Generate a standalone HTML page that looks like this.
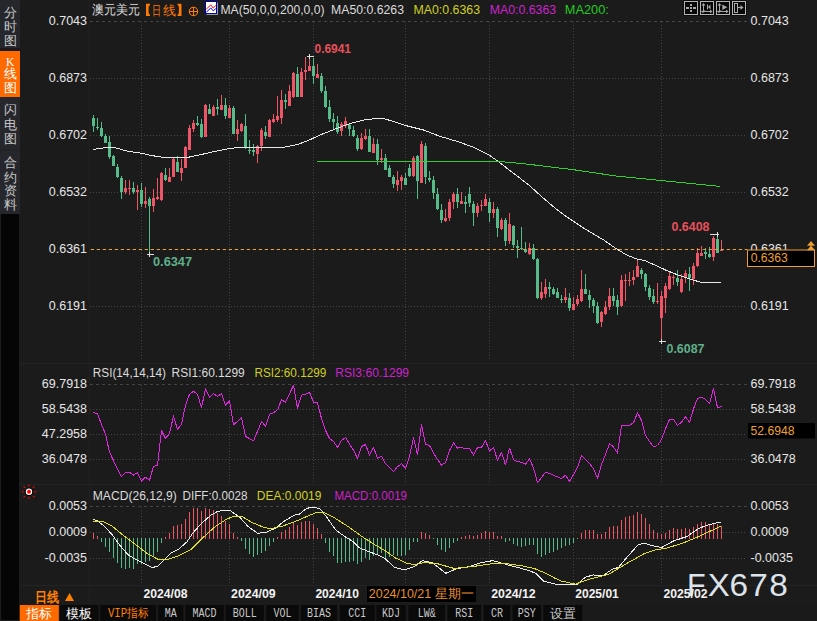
<!DOCTYPE html><html><head><meta charset="utf-8"><style>html,body{margin:0;padding:0;background:#1b1b1b;width:817px;height:621px;overflow:hidden}svg{display:block}text{white-space:pre}</style></head><body>
<svg width="817" height="621" viewBox="0 0 817 621">
<rect x="0" y="0" width="817" height="621" fill="#1b1b1b"/>
<rect x="0" y="0" width="20" height="621" fill="#1d1d1d"/>
<rect x="0" y="0" width="20" height="214" fill="#26272c"/>
<rect x="0" y="48" width="20" height="3" fill="#1a1a1c"/>
<rect x="0" y="51" width="20" height="46" fill="#ff6a00"/>
<rect x="0" y="149.5" width="20" height="1" fill="#1e1f22"/>
<rect x="1" y="214" width="18" height="406" fill="#050505"/>
<text x="10" y="16.9" fill="#c8c8c8" font-size="12.5" font-weight="normal" text-anchor="middle" font-family='"Liberation Sans", sans-serif' >分</text>
<text x="10" y="30.6" fill="#c8c8c8" font-size="12.5" font-weight="normal" text-anchor="middle" font-family='"Liberation Sans", sans-serif' >时</text>
<text x="10" y="44.6" fill="#c8c8c8" font-size="12.5" font-weight="normal" text-anchor="middle" font-family='"Liberation Sans", sans-serif' >图</text>
<text x="10.2" y="66" fill="#ffffff" font-size="11.5" font-weight="normal" text-anchor="middle" font-family='"Liberation Serif", serif' >K</text>
<text x="10" y="78.1" fill="#ffffff" font-size="12.5" font-weight="normal" text-anchor="middle" font-family='"Liberation Sans", sans-serif' >线</text>
<text x="10" y="91.9" fill="#ffffff" font-size="12.5" font-weight="normal" text-anchor="middle" font-family='"Liberation Sans", sans-serif' >图</text>
<text x="10" y="114.1" fill="#c8c8c8" font-size="12.5" font-weight="normal" text-anchor="middle" font-family='"Liberation Sans", sans-serif' >闪</text>
<text x="10" y="128.6" fill="#c8c8c8" font-size="12.5" font-weight="normal" text-anchor="middle" font-family='"Liberation Sans", sans-serif' >电</text>
<text x="10" y="143.1" fill="#c8c8c8" font-size="12.5" font-weight="normal" text-anchor="middle" font-family='"Liberation Sans", sans-serif' >图</text>
<text x="10" y="167.4" fill="#c8c8c8" font-size="12.5" font-weight="normal" text-anchor="middle" font-family='"Liberation Sans", sans-serif' >合</text>
<text x="10" y="181.8" fill="#c8c8c8" font-size="12.5" font-weight="normal" text-anchor="middle" font-family='"Liberation Sans", sans-serif' >约</text>
<text x="10" y="195.4" fill="#c8c8c8" font-size="12.5" font-weight="normal" text-anchor="middle" font-family='"Liberation Sans", sans-serif' >资</text>
<text x="10" y="208.9" fill="#c8c8c8" font-size="12.5" font-weight="normal" text-anchor="middle" font-family='"Liberation Sans", sans-serif' >料</text>
<rect x="19" y="363" width="798" height="1" fill="#232323"/>
<rect x="19" y="484" width="798" height="1" fill="#232323"/>
<rect x="89" y="0" width="1" height="604" fill="#202020"/>
<rect x="21" y="585" width="796" height="1" fill="#232323"/>
<line x1="141.5" y1="22" x2="141.5" y2="361" stroke="#444444" stroke-width="1" stroke-dasharray="1 2"/>
<line x1="141.5" y1="385" x2="141.5" y2="482" stroke="#444444" stroke-width="1" stroke-dasharray="1 2"/>
<line x1="141.5" y1="507" x2="141.5" y2="585" stroke="#444444" stroke-width="1" stroke-dasharray="1 2"/>
<line x1="229.5" y1="22" x2="229.5" y2="361" stroke="#444444" stroke-width="1" stroke-dasharray="1 2"/>
<line x1="229.5" y1="385" x2="229.5" y2="482" stroke="#444444" stroke-width="1" stroke-dasharray="1 2"/>
<line x1="229.5" y1="507" x2="229.5" y2="585" stroke="#444444" stroke-width="1" stroke-dasharray="1 2"/>
<line x1="313.5" y1="22" x2="313.5" y2="361" stroke="#444444" stroke-width="1" stroke-dasharray="1 2"/>
<line x1="313.5" y1="385" x2="313.5" y2="482" stroke="#444444" stroke-width="1" stroke-dasharray="1 2"/>
<line x1="313.5" y1="507" x2="313.5" y2="585" stroke="#444444" stroke-width="1" stroke-dasharray="1 2"/>
<line x1="405.5" y1="22" x2="405.5" y2="361" stroke="#444444" stroke-width="1" stroke-dasharray="1 2"/>
<line x1="405.5" y1="385" x2="405.5" y2="482" stroke="#444444" stroke-width="1" stroke-dasharray="1 2"/>
<line x1="405.5" y1="507" x2="405.5" y2="585" stroke="#444444" stroke-width="1" stroke-dasharray="1 2"/>
<line x1="489.5" y1="22" x2="489.5" y2="361" stroke="#444444" stroke-width="1" stroke-dasharray="1 2"/>
<line x1="489.5" y1="385" x2="489.5" y2="482" stroke="#444444" stroke-width="1" stroke-dasharray="1 2"/>
<line x1="489.5" y1="507" x2="489.5" y2="585" stroke="#444444" stroke-width="1" stroke-dasharray="1 2"/>
<line x1="573.5" y1="22" x2="573.5" y2="361" stroke="#444444" stroke-width="1" stroke-dasharray="1 2"/>
<line x1="573.5" y1="385" x2="573.5" y2="482" stroke="#444444" stroke-width="1" stroke-dasharray="1 2"/>
<line x1="573.5" y1="507" x2="573.5" y2="585" stroke="#444444" stroke-width="1" stroke-dasharray="1 2"/>
<line x1="661.5" y1="22" x2="661.5" y2="361" stroke="#444444" stroke-width="1" stroke-dasharray="1 2"/>
<line x1="661.5" y1="385" x2="661.5" y2="482" stroke="#444444" stroke-width="1" stroke-dasharray="1 2"/>
<line x1="661.5" y1="507" x2="661.5" y2="585" stroke="#444444" stroke-width="1" stroke-dasharray="1 2"/>
<line x1="90" y1="21.5" x2="747" y2="21.5" stroke="#444444" stroke-width="1" stroke-dasharray="3 3"/>
<line x1="90" y1="78.5" x2="747" y2="78.5" stroke="#444444" stroke-width="1" stroke-dasharray="1 2"/>
<line x1="90" y1="135.5" x2="747" y2="135.5" stroke="#444444" stroke-width="1" stroke-dasharray="1 2"/>
<line x1="90" y1="192.5" x2="747" y2="192.5" stroke="#444444" stroke-width="1" stroke-dasharray="1 2"/>
<line x1="90" y1="249.5" x2="747" y2="249.5" stroke="#444444" stroke-width="1" stroke-dasharray="1 2"/>
<line x1="90" y1="306.5" x2="747" y2="306.5" stroke="#444444" stroke-width="1" stroke-dasharray="1 2"/>
<line x1="90" y1="384.5" x2="747" y2="384.5" stroke="#444444" stroke-width="1" stroke-dasharray="3 3"/>
<line x1="90" y1="409.5" x2="747" y2="409.5" stroke="#444444" stroke-width="1" stroke-dasharray="1 2"/>
<line x1="90" y1="434.5" x2="747" y2="434.5" stroke="#444444" stroke-width="1" stroke-dasharray="1 2"/>
<line x1="90" y1="459.5" x2="747" y2="459.5" stroke="#444444" stroke-width="1" stroke-dasharray="1 2"/>
<line x1="90" y1="506.5" x2="747" y2="506.5" stroke="#444444" stroke-width="1" stroke-dasharray="3 3"/>
<line x1="90" y1="532.5" x2="747" y2="532.5" stroke="#444444" stroke-width="1" stroke-dasharray="1 2"/>
<line x1="90" y1="558.5" x2="747" y2="558.5" stroke="#444444" stroke-width="1" stroke-dasharray="1 2"/>
<text x="87" y="24.8" fill="#e6e6e6" font-size="12.5" font-weight="normal" text-anchor="end" font-family='"Liberation Sans", sans-serif' >0.7043</text>
<text x="750.5" y="24.8" fill="#e6e6e6" font-size="12.5" font-weight="normal" text-anchor="start" font-family='"Liberation Sans", sans-serif' >0.7043</text>
<text x="87" y="81.8" fill="#e6e6e6" font-size="12.5" font-weight="normal" text-anchor="end" font-family='"Liberation Sans", sans-serif' >0.6873</text>
<text x="750.5" y="81.8" fill="#e6e6e6" font-size="12.5" font-weight="normal" text-anchor="start" font-family='"Liberation Sans", sans-serif' >0.6873</text>
<text x="87" y="138.8" fill="#e6e6e6" font-size="12.5" font-weight="normal" text-anchor="end" font-family='"Liberation Sans", sans-serif' >0.6702</text>
<text x="750.5" y="138.8" fill="#e6e6e6" font-size="12.5" font-weight="normal" text-anchor="start" font-family='"Liberation Sans", sans-serif' >0.6702</text>
<text x="87" y="195.8" fill="#e6e6e6" font-size="12.5" font-weight="normal" text-anchor="end" font-family='"Liberation Sans", sans-serif' >0.6532</text>
<text x="750.5" y="195.8" fill="#e6e6e6" font-size="12.5" font-weight="normal" text-anchor="start" font-family='"Liberation Sans", sans-serif' >0.6532</text>
<text x="87" y="252.8" fill="#e6e6e6" font-size="12.5" font-weight="normal" text-anchor="end" font-family='"Liberation Sans", sans-serif' >0.6361</text>
<text x="750.5" y="252.8" fill="#e6e6e6" font-size="12.5" font-weight="normal" text-anchor="start" font-family='"Liberation Sans", sans-serif' >0.6361</text>
<text x="87" y="309.8" fill="#e6e6e6" font-size="12.5" font-weight="normal" text-anchor="end" font-family='"Liberation Sans", sans-serif' >0.6191</text>
<text x="750.5" y="309.8" fill="#e6e6e6" font-size="12.5" font-weight="normal" text-anchor="start" font-family='"Liberation Sans", sans-serif' >0.6191</text>
<text x="87" y="387.8" fill="#e6e6e6" font-size="12.5" font-weight="normal" text-anchor="end" font-family='"Liberation Sans", sans-serif' >69.7918</text>
<text x="750.5" y="387.8" fill="#e6e6e6" font-size="12.5" font-weight="normal" text-anchor="start" font-family='"Liberation Sans", sans-serif' >69.7918</text>
<text x="87" y="412.8" fill="#e6e6e6" font-size="12.5" font-weight="normal" text-anchor="end" font-family='"Liberation Sans", sans-serif' >58.5438</text>
<text x="750.5" y="412.8" fill="#e6e6e6" font-size="12.5" font-weight="normal" text-anchor="start" font-family='"Liberation Sans", sans-serif' >58.5438</text>
<text x="87" y="437.8" fill="#e6e6e6" font-size="12.5" font-weight="normal" text-anchor="end" font-family='"Liberation Sans", sans-serif' >47.2958</text>
<text x="87" y="462.8" fill="#e6e6e6" font-size="12.5" font-weight="normal" text-anchor="end" font-family='"Liberation Sans", sans-serif' >36.0478</text>
<text x="750.5" y="462.8" fill="#e6e6e6" font-size="12.5" font-weight="normal" text-anchor="start" font-family='"Liberation Sans", sans-serif' >36.0478</text>
<text x="87" y="509.8" fill="#e6e6e6" font-size="12.5" font-weight="normal" text-anchor="end" font-family='"Liberation Sans", sans-serif' >0.0053</text>
<text x="750.5" y="509.8" fill="#e6e6e6" font-size="12.5" font-weight="normal" text-anchor="start" font-family='"Liberation Sans", sans-serif' >0.0053</text>
<text x="87" y="535.8" fill="#e6e6e6" font-size="12.5" font-weight="normal" text-anchor="end" font-family='"Liberation Sans", sans-serif' >0.0009</text>
<text x="750.5" y="535.8" fill="#e6e6e6" font-size="12.5" font-weight="normal" text-anchor="start" font-family='"Liberation Sans", sans-serif' >0.0009</text>
<text x="87" y="561.8" fill="#e6e6e6" font-size="12.5" font-weight="normal" text-anchor="end" font-family='"Liberation Sans", sans-serif' >-0.0035</text>
<text x="750.5" y="561.8" fill="#e6e6e6" font-size="12.5" font-weight="normal" text-anchor="start" font-family='"Liberation Sans", sans-serif' >-0.0035</text>
<g shape-rendering="crispEdges">
<rect x="93" y="115" width="1" height="17" fill="#55bb88"/>
<rect x="92" y="118" width="3" height="8" fill="#55bb88"/>
<rect x="97" y="118" width="1" height="12" fill="#55bb88"/>
<rect x="96" y="127" width="3" height="1" fill="#55bb88"/>
<rect x="101" y="122" width="1" height="15" fill="#55bb88"/>
<rect x="100" y="128" width="3" height="8" fill="#55bb88"/>
<rect x="105" y="134" width="1" height="9" fill="#55bb88"/>
<rect x="104" y="136" width="3" height="7" fill="#55bb88"/>
<rect x="109" y="136" width="1" height="23" fill="#55bb88"/>
<rect x="108" y="142" width="3" height="15" fill="#55bb88"/>
<rect x="113" y="155" width="1" height="11" fill="#55bb88"/>
<rect x="112" y="156" width="3" height="10" fill="#55bb88"/>
<rect x="117" y="164" width="1" height="14" fill="#55bb88"/>
<rect x="116" y="167" width="3" height="10" fill="#55bb88"/>
<rect x="121" y="176" width="1" height="23" fill="#55bb88"/>
<rect x="120" y="178" width="3" height="14" fill="#55bb88"/>
<rect x="125" y="180" width="1" height="14" fill="#ee5566"/>
<rect x="124" y="188" width="3" height="4" fill="#ee5566"/>
<rect x="129" y="180" width="1" height="15" fill="#ee5566"/>
<rect x="128" y="188" width="3" height="1" fill="#ee5566"/>
<rect x="133" y="182" width="1" height="12" fill="#55bb88"/>
<rect x="132" y="188" width="3" height="4" fill="#55bb88"/>
<rect x="137" y="185" width="1" height="25" fill="#ee5566"/>
<rect x="136" y="190" width="3" height="2" fill="#ee5566"/>
<rect x="141" y="183" width="1" height="24" fill="#55bb88"/>
<rect x="140" y="190" width="3" height="14" fill="#55bb88"/>
<rect x="145" y="187" width="1" height="21" fill="#ee5566"/>
<rect x="144" y="201" width="3" height="3" fill="#ee5566"/>
<rect x="149" y="197" width="1" height="57" fill="#55bb88"/>
<rect x="148" y="199" width="3" height="7" fill="#55bb88"/>
<rect x="153" y="189" width="1" height="23" fill="#ee5566"/>
<rect x="152" y="198" width="3" height="8" fill="#ee5566"/>
<rect x="157" y="178" width="1" height="22" fill="#ee5566"/>
<rect x="156" y="197" width="3" height="2" fill="#ee5566"/>
<rect x="161" y="172" width="1" height="29" fill="#ee5566"/>
<rect x="160" y="173" width="3" height="27" fill="#ee5566"/>
<rect x="165" y="168" width="1" height="13" fill="#55bb88"/>
<rect x="164" y="175" width="3" height="5" fill="#55bb88"/>
<rect x="169" y="168" width="1" height="14" fill="#ee5566"/>
<rect x="168" y="177" width="3" height="5" fill="#ee5566"/>
<rect x="173" y="158" width="1" height="19" fill="#ee5566"/>
<rect x="172" y="159" width="3" height="18" fill="#ee5566"/>
<rect x="177" y="156" width="1" height="16" fill="#55bb88"/>
<rect x="176" y="162" width="3" height="10" fill="#55bb88"/>
<rect x="181" y="159" width="1" height="22" fill="#ee5566"/>
<rect x="180" y="168" width="3" height="5" fill="#ee5566"/>
<rect x="185" y="146" width="1" height="22" fill="#ee5566"/>
<rect x="184" y="147" width="3" height="21" fill="#ee5566"/>
<rect x="189" y="125" width="1" height="25" fill="#ee5566"/>
<rect x="188" y="128" width="3" height="22" fill="#ee5566"/>
<rect x="193" y="120" width="1" height="12" fill="#ee5566"/>
<rect x="192" y="123" width="3" height="6" fill="#ee5566"/>
<rect x="197" y="116" width="1" height="10" fill="#55bb88"/>
<rect x="196" y="123" width="3" height="2" fill="#55bb88"/>
<rect x="201" y="119" width="1" height="19" fill="#55bb88"/>
<rect x="200" y="124" width="3" height="13" fill="#55bb88"/>
<rect x="205" y="104" width="1" height="33" fill="#ee5566"/>
<rect x="204" y="105" width="3" height="32" fill="#ee5566"/>
<rect x="209" y="104" width="1" height="10" fill="#55bb88"/>
<rect x="208" y="109" width="3" height="5" fill="#55bb88"/>
<rect x="213" y="105" width="1" height="11" fill="#ee5566"/>
<rect x="212" y="107" width="3" height="9" fill="#ee5566"/>
<rect x="217" y="99" width="1" height="16" fill="#55bb88"/>
<rect x="216" y="107" width="3" height="2" fill="#55bb88"/>
<rect x="221" y="95" width="1" height="15" fill="#ee5566"/>
<rect x="220" y="105" width="3" height="5" fill="#ee5566"/>
<rect x="225" y="98" width="1" height="21" fill="#55bb88"/>
<rect x="224" y="105" width="3" height="11" fill="#55bb88"/>
<rect x="229" y="105" width="1" height="13" fill="#ee5566"/>
<rect x="228" y="108" width="3" height="10" fill="#ee5566"/>
<rect x="233" y="106" width="1" height="28" fill="#55bb88"/>
<rect x="232" y="108" width="3" height="26" fill="#55bb88"/>
<rect x="237" y="120" width="1" height="21" fill="#ee5566"/>
<rect x="236" y="129" width="3" height="5" fill="#ee5566"/>
<rect x="241" y="123" width="1" height="9" fill="#ee5566"/>
<rect x="240" y="124" width="3" height="7" fill="#ee5566"/>
<rect x="245" y="114" width="1" height="35" fill="#55bb88"/>
<rect x="244" y="126" width="3" height="22" fill="#55bb88"/>
<rect x="249" y="140" width="1" height="14" fill="#55bb88"/>
<rect x="248" y="150" width="3" height="1" fill="#55bb88"/>
<rect x="253" y="144" width="1" height="12" fill="#55bb88"/>
<rect x="252" y="150" width="3" height="2" fill="#55bb88"/>
<rect x="257" y="145" width="1" height="18" fill="#ee5566"/>
<rect x="256" y="146" width="3" height="8" fill="#ee5566"/>
<rect x="261" y="128" width="1" height="23" fill="#ee5566"/>
<rect x="260" y="130" width="3" height="16" fill="#ee5566"/>
<rect x="265" y="126" width="1" height="13" fill="#55bb88"/>
<rect x="264" y="132" width="3" height="4" fill="#55bb88"/>
<rect x="269" y="119" width="1" height="18" fill="#ee5566"/>
<rect x="268" y="120" width="3" height="17" fill="#ee5566"/>
<rect x="273" y="114" width="1" height="9" fill="#ee5566"/>
<rect x="272" y="119" width="3" height="3" fill="#ee5566"/>
<rect x="277" y="96" width="1" height="26" fill="#ee5566"/>
<rect x="276" y="116" width="3" height="4" fill="#ee5566"/>
<rect x="281" y="90" width="1" height="34" fill="#ee5566"/>
<rect x="280" y="100" width="3" height="18" fill="#ee5566"/>
<rect x="285" y="94" width="1" height="15" fill="#55bb88"/>
<rect x="284" y="100" width="3" height="2" fill="#55bb88"/>
<rect x="289" y="85" width="1" height="21" fill="#ee5566"/>
<rect x="288" y="91" width="3" height="15" fill="#ee5566"/>
<rect x="293" y="72" width="1" height="26" fill="#ee5566"/>
<rect x="292" y="73" width="3" height="24" fill="#ee5566"/>
<rect x="297" y="67" width="1" height="30" fill="#55bb88"/>
<rect x="296" y="74" width="3" height="23" fill="#55bb88"/>
<rect x="301" y="68" width="1" height="29" fill="#ee5566"/>
<rect x="300" y="72" width="3" height="25" fill="#ee5566"/>
<rect x="305" y="57" width="1" height="23" fill="#ee5566"/>
<rect x="304" y="70" width="3" height="2" fill="#ee5566"/>
<rect x="309" y="56" width="1" height="15" fill="#ee5566"/>
<rect x="308" y="66" width="3" height="5" fill="#ee5566"/>
<rect x="313" y="58" width="1" height="26" fill="#55bb88"/>
<rect x="312" y="66" width="3" height="10" fill="#55bb88"/>
<rect x="317" y="64" width="1" height="14" fill="#ee5566"/>
<rect x="316" y="74" width="3" height="4" fill="#ee5566"/>
<rect x="321" y="73" width="1" height="20" fill="#55bb88"/>
<rect x="320" y="76" width="3" height="15" fill="#55bb88"/>
<rect x="325" y="86" width="1" height="22" fill="#55bb88"/>
<rect x="324" y="91" width="3" height="16" fill="#55bb88"/>
<rect x="329" y="100" width="1" height="22" fill="#55bb88"/>
<rect x="328" y="107" width="3" height="12" fill="#55bb88"/>
<rect x="333" y="113" width="1" height="17" fill="#55bb88"/>
<rect x="332" y="119" width="3" height="3" fill="#55bb88"/>
<rect x="337" y="116" width="1" height="18" fill="#55bb88"/>
<rect x="336" y="123" width="3" height="9" fill="#55bb88"/>
<rect x="341" y="122" width="1" height="14" fill="#ee5566"/>
<rect x="340" y="124" width="3" height="7" fill="#ee5566"/>
<rect x="345" y="117" width="1" height="11" fill="#ee5566"/>
<rect x="344" y="121" width="3" height="5" fill="#ee5566"/>
<rect x="349" y="123" width="1" height="13" fill="#55bb88"/>
<rect x="348" y="125" width="3" height="4" fill="#55bb88"/>
<rect x="353" y="126" width="1" height="11" fill="#55bb88"/>
<rect x="352" y="130" width="3" height="6" fill="#55bb88"/>
<rect x="357" y="135" width="1" height="16" fill="#55bb88"/>
<rect x="356" y="138" width="3" height="11" fill="#55bb88"/>
<rect x="361" y="133" width="1" height="17" fill="#ee5566"/>
<rect x="360" y="138" width="3" height="11" fill="#ee5566"/>
<rect x="365" y="129" width="1" height="11" fill="#ee5566"/>
<rect x="364" y="136" width="3" height="3" fill="#ee5566"/>
<rect x="369" y="129" width="1" height="23" fill="#55bb88"/>
<rect x="368" y="136" width="3" height="16" fill="#55bb88"/>
<rect x="373" y="138" width="1" height="15" fill="#ee5566"/>
<rect x="372" y="144" width="3" height="9" fill="#ee5566"/>
<rect x="377" y="139" width="1" height="26" fill="#55bb88"/>
<rect x="376" y="144" width="3" height="16" fill="#55bb88"/>
<rect x="381" y="149" width="1" height="14" fill="#ee5566"/>
<rect x="380" y="158" width="3" height="2" fill="#ee5566"/>
<rect x="385" y="154" width="1" height="16" fill="#55bb88"/>
<rect x="384" y="158" width="3" height="12" fill="#55bb88"/>
<rect x="389" y="165" width="1" height="12" fill="#55bb88"/>
<rect x="388" y="168" width="3" height="9" fill="#55bb88"/>
<rect x="393" y="175" width="1" height="13" fill="#55bb88"/>
<rect x="392" y="177" width="3" height="7" fill="#55bb88"/>
<rect x="397" y="171" width="1" height="20" fill="#ee5566"/>
<rect x="396" y="180" width="3" height="5" fill="#ee5566"/>
<rect x="401" y="175" width="1" height="15" fill="#ee5566"/>
<rect x="400" y="177" width="3" height="4" fill="#ee5566"/>
<rect x="405" y="173" width="1" height="12" fill="#55bb88"/>
<rect x="404" y="178" width="3" height="7" fill="#55bb88"/>
<rect x="409" y="164" width="1" height="13" fill="#55bb88"/>
<rect x="408" y="168" width="3" height="8" fill="#55bb88"/>
<rect x="413" y="156" width="1" height="21" fill="#ee5566"/>
<rect x="412" y="158" width="3" height="18" fill="#ee5566"/>
<rect x="417" y="155" width="1" height="44" fill="#55bb88"/>
<rect x="416" y="156" width="3" height="25" fill="#55bb88"/>
<rect x="421" y="141" width="1" height="42" fill="#ee5566"/>
<rect x="420" y="144" width="3" height="39" fill="#ee5566"/>
<rect x="425" y="143" width="1" height="41" fill="#55bb88"/>
<rect x="424" y="146" width="3" height="31" fill="#55bb88"/>
<rect x="429" y="171" width="1" height="11" fill="#55bb88"/>
<rect x="428" y="178" width="3" height="2" fill="#55bb88"/>
<rect x="433" y="176" width="1" height="23" fill="#55bb88"/>
<rect x="432" y="180" width="3" height="13" fill="#55bb88"/>
<rect x="437" y="188" width="1" height="22" fill="#55bb88"/>
<rect x="436" y="194" width="3" height="15" fill="#55bb88"/>
<rect x="441" y="204" width="1" height="19" fill="#55bb88"/>
<rect x="440" y="210" width="3" height="10" fill="#55bb88"/>
<rect x="445" y="209" width="1" height="13" fill="#ee5566"/>
<rect x="444" y="218" width="3" height="3" fill="#ee5566"/>
<rect x="449" y="199" width="1" height="22" fill="#ee5566"/>
<rect x="448" y="202" width="3" height="16" fill="#ee5566"/>
<rect x="453" y="192" width="1" height="17" fill="#ee5566"/>
<rect x="452" y="194" width="3" height="8" fill="#ee5566"/>
<rect x="457" y="188" width="1" height="20" fill="#55bb88"/>
<rect x="456" y="194" width="3" height="8" fill="#55bb88"/>
<rect x="461" y="192" width="1" height="12" fill="#ee5566"/>
<rect x="460" y="201" width="3" height="3" fill="#ee5566"/>
<rect x="465" y="196" width="1" height="17" fill="#55bb88"/>
<rect x="464" y="202" width="3" height="2" fill="#55bb88"/>
<rect x="469" y="187" width="1" height="20" fill="#55bb88"/>
<rect x="468" y="194" width="3" height="9" fill="#55bb88"/>
<rect x="473" y="201" width="1" height="25" fill="#55bb88"/>
<rect x="472" y="204" width="3" height="9" fill="#55bb88"/>
<rect x="477" y="203" width="1" height="14" fill="#ee5566"/>
<rect x="476" y="206" width="3" height="7" fill="#ee5566"/>
<rect x="481" y="200" width="1" height="11" fill="#ee5566"/>
<rect x="480" y="205" width="3" height="1" fill="#ee5566"/>
<rect x="485" y="194" width="1" height="12" fill="#ee5566"/>
<rect x="484" y="199" width="3" height="7" fill="#ee5566"/>
<rect x="489" y="198" width="1" height="24" fill="#55bb88"/>
<rect x="488" y="202" width="3" height="11" fill="#55bb88"/>
<rect x="493" y="202" width="1" height="16" fill="#ee5566"/>
<rect x="492" y="209" width="3" height="4" fill="#ee5566"/>
<rect x="497" y="207" width="1" height="30" fill="#55bb88"/>
<rect x="496" y="209" width="3" height="19" fill="#55bb88"/>
<rect x="501" y="218" width="1" height="12" fill="#ee5566"/>
<rect x="500" y="220" width="3" height="9" fill="#ee5566"/>
<rect x="505" y="218" width="1" height="28" fill="#55bb88"/>
<rect x="504" y="220" width="3" height="21" fill="#55bb88"/>
<rect x="509" y="213" width="1" height="31" fill="#ee5566"/>
<rect x="508" y="224" width="3" height="17" fill="#ee5566"/>
<rect x="513" y="225" width="1" height="23" fill="#55bb88"/>
<rect x="512" y="226" width="3" height="19" fill="#55bb88"/>
<rect x="517" y="240" width="1" height="18" fill="#55bb88"/>
<rect x="516" y="246" width="3" height="2" fill="#55bb88"/>
<rect x="521" y="227" width="1" height="23" fill="#55bb88"/>
<rect x="520" y="248" width="3" height="1" fill="#55bb88"/>
<rect x="525" y="242" width="1" height="11" fill="#55bb88"/>
<rect x="524" y="249" width="3" height="3" fill="#55bb88"/>
<rect x="529" y="243" width="1" height="12" fill="#ee5566"/>
<rect x="528" y="248" width="3" height="6" fill="#ee5566"/>
<rect x="533" y="244" width="1" height="16" fill="#55bb88"/>
<rect x="532" y="248" width="3" height="11" fill="#55bb88"/>
<rect x="537" y="258" width="1" height="41" fill="#55bb88"/>
<rect x="536" y="259" width="3" height="39" fill="#55bb88"/>
<rect x="541" y="282" width="1" height="18" fill="#ee5566"/>
<rect x="540" y="292" width="3" height="6" fill="#ee5566"/>
<rect x="545" y="279" width="1" height="19" fill="#ee5566"/>
<rect x="544" y="287" width="3" height="7" fill="#ee5566"/>
<rect x="549" y="282" width="1" height="15" fill="#55bb88"/>
<rect x="548" y="287" width="3" height="2" fill="#55bb88"/>
<rect x="553" y="287" width="1" height="8" fill="#55bb88"/>
<rect x="552" y="289" width="3" height="5" fill="#55bb88"/>
<rect x="557" y="288" width="1" height="10" fill="#55bb88"/>
<rect x="556" y="292" width="3" height="6" fill="#55bb88"/>
<rect x="561" y="295" width="1" height="8" fill="#55bb88"/>
<rect x="560" y="299" width="3" height="1" fill="#55bb88"/>
<rect x="565" y="288" width="1" height="15" fill="#ee5566"/>
<rect x="564" y="297" width="3" height="3" fill="#ee5566"/>
<rect x="569" y="293" width="1" height="18" fill="#55bb88"/>
<rect x="568" y="298" width="3" height="10" fill="#55bb88"/>
<rect x="573" y="297" width="1" height="13" fill="#ee5566"/>
<rect x="572" y="304" width="3" height="6" fill="#ee5566"/>
<rect x="577" y="295" width="1" height="11" fill="#ee5566"/>
<rect x="576" y="299" width="3" height="5" fill="#ee5566"/>
<rect x="581" y="270" width="1" height="32" fill="#ee5566"/>
<rect x="580" y="289" width="3" height="12" fill="#ee5566"/>
<rect x="585" y="274" width="1" height="20" fill="#55bb88"/>
<rect x="584" y="289" width="3" height="5" fill="#55bb88"/>
<rect x="589" y="290" width="1" height="18" fill="#55bb88"/>
<rect x="588" y="295" width="3" height="5" fill="#55bb88"/>
<rect x="593" y="298" width="1" height="15" fill="#55bb88"/>
<rect x="592" y="300" width="3" height="6" fill="#55bb88"/>
<rect x="597" y="302" width="1" height="22" fill="#55bb88"/>
<rect x="596" y="306" width="3" height="17" fill="#55bb88"/>
<rect x="601" y="311" width="1" height="16" fill="#ee5566"/>
<rect x="600" y="312" width="3" height="10" fill="#ee5566"/>
<rect x="605" y="301" width="1" height="14" fill="#ee5566"/>
<rect x="604" y="307" width="3" height="7" fill="#ee5566"/>
<rect x="609" y="288" width="1" height="22" fill="#ee5566"/>
<rect x="608" y="296" width="3" height="11" fill="#ee5566"/>
<rect x="613" y="288" width="1" height="18" fill="#55bb88"/>
<rect x="612" y="296" width="3" height="5" fill="#55bb88"/>
<rect x="617" y="295" width="1" height="20" fill="#55bb88"/>
<rect x="616" y="300" width="3" height="7" fill="#55bb88"/>
<rect x="621" y="275" width="1" height="32" fill="#ee5566"/>
<rect x="620" y="280" width="3" height="26" fill="#ee5566"/>
<rect x="625" y="274" width="1" height="27" fill="#ee5566"/>
<rect x="624" y="280" width="3" height="1" fill="#ee5566"/>
<rect x="629" y="272" width="1" height="14" fill="#ee5566"/>
<rect x="628" y="280" width="3" height="1" fill="#ee5566"/>
<rect x="633" y="270" width="1" height="15" fill="#ee5566"/>
<rect x="632" y="277" width="3" height="3" fill="#ee5566"/>
<rect x="637" y="260" width="1" height="17" fill="#ee5566"/>
<rect x="636" y="266" width="3" height="11" fill="#ee5566"/>
<rect x="641" y="268" width="1" height="11" fill="#55bb88"/>
<rect x="640" y="270" width="3" height="4" fill="#55bb88"/>
<rect x="645" y="273" width="1" height="18" fill="#55bb88"/>
<rect x="644" y="274" width="3" height="13" fill="#55bb88"/>
<rect x="649" y="285" width="1" height="15" fill="#55bb88"/>
<rect x="648" y="288" width="3" height="9" fill="#55bb88"/>
<rect x="653" y="289" width="1" height="15" fill="#55bb88"/>
<rect x="652" y="296" width="3" height="6" fill="#55bb88"/>
<rect x="657" y="283" width="1" height="21" fill="#ee5566"/>
<rect x="656" y="301" width="3" height="1" fill="#ee5566"/>
<rect x="661" y="291" width="1" height="51" fill="#ee5566"/>
<rect x="660" y="296" width="3" height="22" fill="#ee5566"/>
<rect x="665" y="283" width="1" height="30" fill="#ee5566"/>
<rect x="664" y="286" width="3" height="12" fill="#ee5566"/>
<rect x="669" y="272" width="1" height="18" fill="#ee5566"/>
<rect x="668" y="276" width="3" height="13" fill="#ee5566"/>
<rect x="673" y="275" width="1" height="10" fill="#ee5566"/>
<rect x="672" y="277" width="3" height="1" fill="#ee5566"/>
<rect x="677" y="270" width="1" height="16" fill="#55bb88"/>
<rect x="676" y="278" width="3" height="4" fill="#55bb88"/>
<rect x="681" y="274" width="1" height="19" fill="#ee5566"/>
<rect x="680" y="279" width="3" height="13" fill="#ee5566"/>
<rect x="685" y="270" width="1" height="13" fill="#ee5566"/>
<rect x="684" y="273" width="3" height="5" fill="#ee5566"/>
<rect x="689" y="267" width="1" height="24" fill="#55bb88"/>
<rect x="688" y="274" width="3" height="4" fill="#55bb88"/>
<rect x="693" y="263" width="1" height="22" fill="#ee5566"/>
<rect x="692" y="266" width="3" height="13" fill="#ee5566"/>
<rect x="697" y="248" width="1" height="19" fill="#ee5566"/>
<rect x="696" y="253" width="3" height="13" fill="#ee5566"/>
<rect x="701" y="246" width="1" height="10" fill="#ee5566"/>
<rect x="700" y="253" width="3" height="3" fill="#ee5566"/>
<rect x="705" y="248" width="1" height="11" fill="#55bb88"/>
<rect x="704" y="252" width="3" height="2" fill="#55bb88"/>
<rect x="709" y="247" width="1" height="11" fill="#55bb88"/>
<rect x="708" y="254" width="3" height="3" fill="#55bb88"/>
<rect x="713" y="236" width="1" height="25" fill="#ee5566"/>
<rect x="712" y="238" width="3" height="19" fill="#ee5566"/>
<rect x="717" y="235" width="1" height="18" fill="#55bb88"/>
<rect x="716" y="239" width="3" height="14" fill="#55bb88"/>
<rect x="721" y="240" width="1" height="11" fill="#ee5566"/>
<rect x="720" y="250" width="3" height="1" fill="#ee5566"/>
</g>
<polyline points="93.0,149.4 109.3,147.1 116.0,147.9 126.6,151.0 142.0,153.3 151.8,155.6 165.3,157.6 175.6,158.0 187.2,157.5 202.6,154.2 218.1,150.7 229.7,148.4 244.0,147.2 282.5,147.6 298.0,144.3 307.6,140.8 320.0,135.0 335.3,129.0 350.8,123.2 366.2,119.5 381.5,118.2 390.8,120.6 406.2,125.7 423.4,130.0 440.0,136.3 457.7,141.6 471.9,146.6 489.6,155.4 498.5,161.6 510.9,171.4 528.6,184.7 539.2,194.4 553.4,206.8 567.6,217.5 581.3,226.6 592.5,233.4 603.8,240.1 615.1,248.0 626.3,254.8 637.6,259.3 644.4,260.4 655.6,265.4 666.9,270.6 678.2,275.1 689.4,278.8 700.7,282.3 721.0,282.3" fill="none" stroke="#e8e8e8" stroke-width="1" stroke-linejoin="round" shape-rendering="crispEdges"/>
<polyline points="317.0,161.2 498.5,161.4 510.9,162.5 528.6,164.3 546.3,166.4 564.0,168.7 570.0,169.2 592.5,172.5 615.0,175.9 637.6,178.2 660.1,180.4 682.7,182.7 705.2,184.9 720.5,186.5" fill="none" stroke="#30d030" stroke-width="1" stroke-linejoin="round" shape-rendering="crispEdges"/>
<line x1="91" y1="249.5" x2="747" y2="249.5" stroke="#f0a030" stroke-width="1" stroke-dasharray="3 3"/>
<path d="M307,56.5 H314 M309.5,54 V59" stroke="#e0e0e0" stroke-width="1" fill="none" shape-rendering="crispEdges"/>
<path d="M147,254.5 H154 M149.5,252 V257" stroke="#e0e0e0" stroke-width="1" fill="none" shape-rendering="crispEdges"/>
<path d="M659,341.5 H666 M661.5,339 V344" stroke="#e0e0e0" stroke-width="1" fill="none" shape-rendering="crispEdges"/>
<path d="M710,234.5 H719 M717.5,232 V237" stroke="#e0e0e0" stroke-width="1" fill="none" shape-rendering="crispEdges"/>
<text x="314.5" y="53" fill="#e8505a" font-size="12.5" font-weight="bold" text-anchor="start" font-family='"Liberation Sans", sans-serif' textLength="36.5" lengthAdjust="spacingAndGlyphs" >0.6941</text>
<text x="153" y="266" fill="#5fb08a" font-size="12.5" font-weight="bold" text-anchor="start" font-family='"Liberation Sans", sans-serif' textLength="39" lengthAdjust="spacingAndGlyphs" >0.6347</text>
<text x="666.5" y="353" fill="#5fb08a" font-size="12.5" font-weight="bold" text-anchor="start" font-family='"Liberation Sans", sans-serif' textLength="38" lengthAdjust="spacingAndGlyphs" >0.6087</text>
<text x="671.5" y="230.8" fill="#e8505a" font-size="12.5" font-weight="bold" text-anchor="start" font-family='"Liberation Sans", sans-serif' textLength="38" lengthAdjust="spacingAndGlyphs" >0.6408</text>
<rect x="747.5" y="250" width="67" height="16.5" fill="#000" stroke="#f0a030" stroke-width="1"/>
<text x="750.7" y="262.3" fill="#f0a030" font-size="12.5" font-weight="normal" text-anchor="start" font-family='"Liberation Sans", sans-serif' textLength="37" lengthAdjust="spacingAndGlyphs" >0.6363</text>
<path d="M807,245.8 L811,241 L815,245.8 Z M807,250.2 L811,245.4 L815,250.2 Z" fill="#f0a030"/>
<polyline points="93.5,412.3 97.5,413.9 101.5,424.4 105.5,434.1 109.5,452.2 113.5,460.6 117.5,468.7 121.5,476.7 125.5,472.3 129.5,472.3 133.5,475.1 137.5,472.7 141.5,481.2 145.5,477.1 149.5,480.3 153.5,466.3 157.5,465.7 161.5,430.4 165.5,438.5 169.5,433.5 173.5,416.0 177.5,429.4 181.5,424.4 185.5,405.3 189.5,394.2 193.5,391.2 197.5,394.2 201.5,407.9 205.5,388.6 209.5,397.2 213.5,393.8 217.5,396.2 221.5,393.8 225.5,405.3 229.5,400.7 233.5,424.8 237.5,421.4 241.5,417.4 245.5,436.5 249.5,438.5 253.5,440.9 257.5,431.4 261.5,421.4 265.5,426.4 269.5,414.3 273.5,412.7 277.5,409.9 281.5,399.8 285.5,402.3 289.5,393.8 293.5,385.2 297.5,408.3 301.5,395.2 305.5,394.2 309.5,392.2 313.5,402.3 317.5,402.7 321.5,418.4 325.5,430.4 329.5,438.5 333.5,441.5 337.5,447.5 341.5,440.5 345.5,437.5 349.5,444.1 353.5,450.2 357.5,458.6 361.5,446.5 365.5,444.5 369.5,455.0 373.5,447.5 377.5,458.2 381.5,456.2 385.5,463.6 389.5,467.7 393.5,471.7 397.5,466.7 401.5,463.6 405.5,468.3 409.5,456.6 413.5,437.5 417.5,454.6 421.5,424.4 425.5,444.1 429.5,445.5 433.5,453.0 437.5,459.6 441.5,465.0 445.5,462.6 449.5,450.6 453.5,442.9 457.5,448.1 461.5,447.5 465.5,449.0 469.5,448.1 473.5,455.0 477.5,447.5 481.5,447.5 485.5,440.5 489.5,451.0 493.5,447.5 497.5,460.2 501.5,452.6 505.5,465.0 509.5,448.1 513.5,459.6 517.5,461.6 521.5,462.2 525.5,464.2 529.5,459.0 533.5,467.7 537.5,482.8 541.5,477.7 545.5,472.3 549.5,473.4 553.5,475.4 557.5,476.7 561.5,478.7 565.5,475.1 569.5,481.2 573.5,474.7 577.5,467.1 581.5,455.6 585.5,459.6 589.5,463.6 593.5,468.7 597.5,478.3 601.5,464.6 605.5,454.6 609.5,443.5 613.5,446.9 617.5,453.0 621.5,425.4 625.5,425.4 629.5,425.4 633.5,422.8 637.5,412.7 641.5,420.4 645.5,435.5 649.5,441.5 653.5,446.9 657.5,445.5 661.5,439.5 665.5,428.6 669.5,419.4 673.5,419.4 677.5,425.4 681.5,422.2 685.5,416.8 689.5,422.4 693.5,408.8 697.5,398.5 701.5,397.2 705.5,399.2 709.5,403.6 713.5,388.2 717.5,407.9 721.5,406.3" fill="none" stroke="#e028e0" stroke-width="1" stroke-linejoin="round" shape-rendering="crispEdges"/>
<rect x="748" y="423" width="67" height="15.5" fill="#000"/>
<text x="750.5" y="435" fill="#f0a030" font-size="12.5" font-weight="normal" text-anchor="start" font-family='"Liberation Sans", sans-serif' textLength="44" lengthAdjust="spacingAndGlyphs" >52.6948</text>
<g shape-rendering="crispEdges">
<rect x="93" y="533" width="1" height="6" fill="#ee5566"/>
<rect x="97" y="536" width="1" height="3" fill="#ee5566"/>
<rect x="101" y="538" width="1" height="4" fill="#55bb88"/>
<rect x="105" y="538" width="1" height="9" fill="#55bb88"/>
<rect x="109" y="538" width="1" height="14" fill="#55bb88"/>
<rect x="113" y="538" width="1" height="20" fill="#55bb88"/>
<rect x="117" y="538" width="1" height="25" fill="#55bb88"/>
<rect x="121" y="538" width="1" height="30" fill="#55bb88"/>
<rect x="125" y="538" width="1" height="31" fill="#55bb88"/>
<rect x="129" y="538" width="1" height="30" fill="#55bb88"/>
<rect x="133" y="538" width="1" height="31" fill="#55bb88"/>
<rect x="137" y="538" width="1" height="26" fill="#55bb88"/>
<rect x="141" y="538" width="1" height="26" fill="#55bb88"/>
<rect x="145" y="538" width="1" height="24" fill="#55bb88"/>
<rect x="149" y="538" width="1" height="23" fill="#55bb88"/>
<rect x="153" y="538" width="1" height="19" fill="#55bb88"/>
<rect x="157" y="538" width="1" height="14" fill="#55bb88"/>
<rect x="161" y="538" width="1" height="5" fill="#55bb88"/>
<rect x="165" y="537" width="1" height="2" fill="#ee5566"/>
<rect x="169" y="533" width="1" height="6" fill="#ee5566"/>
<rect x="173" y="526" width="1" height="13" fill="#ee5566"/>
<rect x="177" y="525" width="1" height="14" fill="#ee5566"/>
<rect x="181" y="524" width="1" height="15" fill="#ee5566"/>
<rect x="185" y="519" width="1" height="20" fill="#ee5566"/>
<rect x="189" y="512" width="1" height="27" fill="#ee5566"/>
<rect x="193" y="508" width="1" height="31" fill="#ee5566"/>
<rect x="197" y="508" width="1" height="31" fill="#ee5566"/>
<rect x="201" y="511" width="1" height="28" fill="#ee5566"/>
<rect x="205" y="508" width="1" height="31" fill="#ee5566"/>
<rect x="209" y="509" width="1" height="30" fill="#ee5566"/>
<rect x="213" y="510" width="1" height="29" fill="#ee5566"/>
<rect x="217" y="513" width="1" height="26" fill="#ee5566"/>
<rect x="221" y="516" width="1" height="23" fill="#ee5566"/>
<rect x="225" y="521" width="1" height="18" fill="#ee5566"/>
<rect x="229" y="524" width="1" height="15" fill="#ee5566"/>
<rect x="233" y="533" width="1" height="6" fill="#ee5566"/>
<rect x="237" y="537" width="1" height="2" fill="#ee5566"/>
<rect x="241" y="538" width="1" height="3" fill="#55bb88"/>
<rect x="245" y="538" width="1" height="11" fill="#55bb88"/>
<rect x="249" y="538" width="1" height="16" fill="#55bb88"/>
<rect x="253" y="538" width="1" height="19" fill="#55bb88"/>
<rect x="257" y="538" width="1" height="17" fill="#55bb88"/>
<rect x="261" y="538" width="1" height="15" fill="#55bb88"/>
<rect x="265" y="538" width="1" height="13" fill="#55bb88"/>
<rect x="269" y="538" width="1" height="8" fill="#55bb88"/>
<rect x="273" y="538" width="1" height="4" fill="#55bb88"/>
<rect x="277" y="537" width="1" height="2" fill="#ee5566"/>
<rect x="281" y="532" width="1" height="7" fill="#ee5566"/>
<rect x="285" y="530" width="1" height="9" fill="#ee5566"/>
<rect x="289" y="527" width="1" height="12" fill="#ee5566"/>
<rect x="293" y="522" width="1" height="17" fill="#ee5566"/>
<rect x="297" y="525" width="1" height="14" fill="#ee5566"/>
<rect x="301" y="522" width="1" height="17" fill="#ee5566"/>
<rect x="305" y="521" width="1" height="18" fill="#ee5566"/>
<rect x="309" y="521" width="1" height="18" fill="#ee5566"/>
<rect x="313" y="524" width="1" height="15" fill="#ee5566"/>
<rect x="317" y="528" width="1" height="11" fill="#ee5566"/>
<rect x="321" y="534" width="1" height="5" fill="#ee5566"/>
<rect x="325" y="538" width="1" height="5" fill="#55bb88"/>
<rect x="329" y="538" width="1" height="14" fill="#55bb88"/>
<rect x="333" y="538" width="1" height="18" fill="#55bb88"/>
<rect x="337" y="538" width="1" height="25" fill="#55bb88"/>
<rect x="341" y="538" width="1" height="25" fill="#55bb88"/>
<rect x="345" y="538" width="1" height="24" fill="#55bb88"/>
<rect x="349" y="538" width="1" height="24" fill="#55bb88"/>
<rect x="353" y="538" width="1" height="23" fill="#55bb88"/>
<rect x="357" y="538" width="1" height="26" fill="#55bb88"/>
<rect x="361" y="538" width="1" height="24" fill="#55bb88"/>
<rect x="365" y="538" width="1" height="20" fill="#55bb88"/>
<rect x="369" y="538" width="1" height="22" fill="#55bb88"/>
<rect x="373" y="538" width="1" height="18" fill="#55bb88"/>
<rect x="377" y="538" width="1" height="17" fill="#55bb88"/>
<rect x="381" y="538" width="1" height="15" fill="#55bb88"/>
<rect x="385" y="538" width="1" height="20" fill="#55bb88"/>
<rect x="389" y="538" width="1" height="19" fill="#55bb88"/>
<rect x="393" y="538" width="1" height="17" fill="#55bb88"/>
<rect x="397" y="538" width="1" height="18" fill="#55bb88"/>
<rect x="401" y="538" width="1" height="18" fill="#55bb88"/>
<rect x="405" y="538" width="1" height="17" fill="#55bb88"/>
<rect x="409" y="538" width="1" height="12" fill="#55bb88"/>
<rect x="413" y="538" width="1" height="4" fill="#55bb88"/>
<rect x="417" y="538" width="1" height="4" fill="#55bb88"/>
<rect x="421" y="532" width="1" height="7" fill="#ee5566"/>
<rect x="425" y="533" width="1" height="6" fill="#ee5566"/>
<rect x="429" y="535" width="1" height="4" fill="#ee5566"/>
<rect x="433" y="538" width="1" height="1" fill="#55bb88"/>
<rect x="437" y="538" width="1" height="7" fill="#55bb88"/>
<rect x="441" y="538" width="1" height="12" fill="#55bb88"/>
<rect x="445" y="538" width="1" height="14" fill="#55bb88"/>
<rect x="449" y="538" width="1" height="10" fill="#55bb88"/>
<rect x="453" y="538" width="1" height="5" fill="#55bb88"/>
<rect x="457" y="538" width="1" height="3" fill="#55bb88"/>
<rect x="461" y="537" width="1" height="2" fill="#ee5566"/>
<rect x="465" y="536" width="1" height="3" fill="#ee5566"/>
<rect x="469" y="535" width="1" height="4" fill="#ee5566"/>
<rect x="473" y="536" width="1" height="3" fill="#ee5566"/>
<rect x="477" y="535" width="1" height="4" fill="#ee5566"/>
<rect x="481" y="533" width="1" height="6" fill="#ee5566"/>
<rect x="485" y="531" width="1" height="8" fill="#ee5566"/>
<rect x="489" y="532" width="1" height="7" fill="#ee5566"/>
<rect x="493" y="532" width="1" height="7" fill="#ee5566"/>
<rect x="497" y="536" width="1" height="3" fill="#ee5566"/>
<rect x="501" y="536" width="1" height="3" fill="#ee5566"/>
<rect x="505" y="538" width="1" height="4" fill="#55bb88"/>
<rect x="509" y="538" width="1" height="3" fill="#55bb88"/>
<rect x="513" y="538" width="1" height="6" fill="#55bb88"/>
<rect x="517" y="538" width="1" height="8" fill="#55bb88"/>
<rect x="521" y="538" width="1" height="9" fill="#55bb88"/>
<rect x="525" y="538" width="1" height="8" fill="#55bb88"/>
<rect x="529" y="538" width="1" height="7" fill="#55bb88"/>
<rect x="533" y="538" width="1" height="7" fill="#55bb88"/>
<rect x="537" y="538" width="1" height="16" fill="#55bb88"/>
<rect x="541" y="538" width="1" height="19" fill="#55bb88"/>
<rect x="545" y="538" width="1" height="17" fill="#55bb88"/>
<rect x="549" y="538" width="1" height="15" fill="#55bb88"/>
<rect x="553" y="538" width="1" height="14" fill="#55bb88"/>
<rect x="557" y="538" width="1" height="12" fill="#55bb88"/>
<rect x="561" y="538" width="1" height="10" fill="#55bb88"/>
<rect x="565" y="538" width="1" height="8" fill="#55bb88"/>
<rect x="569" y="538" width="1" height="7" fill="#55bb88"/>
<rect x="573" y="538" width="1" height="5" fill="#55bb88"/>
<rect x="577" y="538" width="1" height="1" fill="#55bb88"/>
<rect x="581" y="533" width="1" height="6" fill="#ee5566"/>
<rect x="585" y="530" width="1" height="9" fill="#ee5566"/>
<rect x="589" y="530" width="1" height="9" fill="#ee5566"/>
<rect x="593" y="530" width="1" height="9" fill="#ee5566"/>
<rect x="597" y="534" width="1" height="5" fill="#ee5566"/>
<rect x="601" y="534" width="1" height="5" fill="#ee5566"/>
<rect x="605" y="532" width="1" height="7" fill="#ee5566"/>
<rect x="609" y="527" width="1" height="12" fill="#ee5566"/>
<rect x="613" y="526" width="1" height="13" fill="#ee5566"/>
<rect x="617" y="526" width="1" height="13" fill="#ee5566"/>
<rect x="621" y="520" width="1" height="19" fill="#ee5566"/>
<rect x="625" y="517" width="1" height="22" fill="#ee5566"/>
<rect x="629" y="516" width="1" height="23" fill="#ee5566"/>
<rect x="633" y="515" width="1" height="24" fill="#ee5566"/>
<rect x="637" y="512" width="1" height="27" fill="#ee5566"/>
<rect x="641" y="514" width="1" height="25" fill="#ee5566"/>
<rect x="645" y="518" width="1" height="21" fill="#ee5566"/>
<rect x="649" y="524" width="1" height="15" fill="#ee5566"/>
<rect x="653" y="530" width="1" height="9" fill="#ee5566"/>
<rect x="657" y="533" width="1" height="6" fill="#ee5566"/>
<rect x="661" y="534" width="1" height="5" fill="#ee5566"/>
<rect x="665" y="533" width="1" height="6" fill="#ee5566"/>
<rect x="669" y="530" width="1" height="9" fill="#ee5566"/>
<rect x="673" y="528" width="1" height="11" fill="#ee5566"/>
<rect x="677" y="529" width="1" height="10" fill="#ee5566"/>
<rect x="681" y="529" width="1" height="10" fill="#ee5566"/>
<rect x="685" y="528" width="1" height="11" fill="#ee5566"/>
<rect x="689" y="529" width="1" height="10" fill="#ee5566"/>
<rect x="693" y="527" width="1" height="12" fill="#ee5566"/>
<rect x="697" y="524" width="1" height="15" fill="#ee5566"/>
<rect x="701" y="522" width="1" height="17" fill="#ee5566"/>
<rect x="705" y="522" width="1" height="17" fill="#ee5566"/>
<rect x="709" y="524" width="1" height="15" fill="#ee5566"/>
<rect x="713" y="524" width="1" height="15" fill="#ee5566"/>
<rect x="717" y="524" width="1" height="15" fill="#ee5566"/>
<rect x="721" y="526" width="1" height="13" fill="#ee5566"/>
</g>
<polyline points="92.8,519.5 96.8,520.5 104.6,526.3 112.4,535.1 120.3,545.9 128.1,554.7 135.9,559.6 143.8,563.5 151.6,567.5 157.5,566.5 163.3,560.6 171.2,552.8 179.0,548.9 186.8,542.0 192.7,533.2 200.5,524.4 210.3,515.6 218.2,511.1 229.9,510.3 235.8,514.6 240.0,517.5 247.8,526.3 257.6,533.2 265.5,532.6 275.3,528.3 285.0,520.5 294.8,515.0 298.8,514.6 306.6,508.3 314.4,507.1 320.3,509.1 326.2,516.5 336.0,530.3 345.8,537.1 353.6,542.0 359.5,547.9 369.3,551.8 377.1,554.7 385.0,558.6 394.7,567.5 404.8,569.8 414.6,566.5 422.4,560.6 432.2,562.6 445.9,573.3 455.7,569.0 469.4,566.5 481.2,562.6 492.9,560.6 502.7,563.5 516.4,567.1 528.2,570.4 536.0,573.3 543.8,581.2 555.0,584.1 577.4,584.1 585.3,577.3 593.1,574.9 602.9,575.7 612.7,569.0 618.5,567.5 628.3,555.7 638.1,544.9 644.0,543.0 651.8,545.5 661.6,547.5 673.4,541.0 687.1,536.5 698.8,528.3 710.0,524.4 716.3,523.0 720.7,522.0" fill="none" stroke="#ececec" stroke-width="1" stroke-linejoin="round" shape-rendering="crispEdges"/>
<polyline points="92.8,521.0 102.6,521.4 112.4,526.3 124.2,536.1 135.9,544.9 147.7,553.8 159.4,560.0 167.3,559.6 179.0,555.7 190.8,549.8 202.5,538.1 214.3,527.3 226.0,519.5 233.8,516.2 241.7,516.2 251.8,522.4 263.5,527.3 271.3,528.7 283.1,525.9 298.8,520.1 308.5,515.6 316.4,512.6 324.2,512.6 334.0,517.5 347.7,526.3 361.4,536.1 375.1,544.9 386.9,551.8 395.0,557.7 406.8,563.5 414.6,564.5 424.4,562.6 438.1,563.9 453.8,568.4 473.3,566.5 492.9,563.5 504.7,563.5 520.3,565.5 534.0,568.4 543.8,572.4 555.0,578.2 561.8,581.2 575.5,584.1 589.2,579.2 608.8,574.3 628.3,562.6 644.0,553.8 655.8,549.8 667.5,547.9 683.2,543.0 698.8,536.5 710.0,531.2 720.7,526.4" fill="none" stroke="#e0e020" stroke-width="1" stroke-linejoin="round" shape-rendering="crispEdges"/>
<text x="91.5" y="14" fill="#dcdcdc" font-size="12.5" font-weight="normal" text-anchor="start" font-family='"Liberation Sans", sans-serif' textLength="48" lengthAdjust="spacingAndGlyphs" >澳元美元</text>
<path d="M146,3.8 H150 V5 Q148.6,5.6 148.6,7.5 V12.2 Q148.6,14.1 150,14.7 V15.9 H146 Z" fill="#ff7800"/>
<path d="M181.5,3.8 H177.5 V5 Q178.9,5.6 178.9,7.5 V12.2 Q178.9,14.1 177.5,14.7 V15.9 H181.5 Z" fill="#ff7800"/>
<text x="152" y="14.8" fill="#ff7800" font-size="12.5" font-weight="normal" text-anchor="start" font-family='"Liberation Sans", sans-serif' textLength="9" lengthAdjust="spacingAndGlyphs" >日</text>
<text x="163" y="14.8" fill="#ff7800" font-size="12.5" font-weight="normal" text-anchor="start" font-family='"Liberation Sans", sans-serif' textLength="13" lengthAdjust="spacingAndGlyphs" >线</text>
<circle cx="193.5" cy="11.5" r="4.2" fill="none" stroke="#ff7f00" stroke-width="1.1"/><path d="M189.3,11.5 H197.7 M193.5,7.3 V15.7" stroke="#ff7f00" stroke-width="1"/>
<rect x="206.5" y="2.5" width="11.5" height="12.5" fill="#9a9a9a"/><rect x="205.5" y="1.5" width="11" height="12" fill="#fff" stroke="#0000b0" stroke-width="1"/>
<polyline points="206.3,9.2 210.8,4.9 213.2,8 215.9,5.5" fill="none" stroke="#ff0000" stroke-width="1"/>
<polyline points="206.3,12.2 210.8,8 213.2,10.8 215.9,8.6" fill="none" stroke="#0000ff" stroke-width="1"/>
<text x="220.5" y="14" fill="#dcdcdc" font-size="12.5" font-weight="normal" text-anchor="start" font-family='"Liberation Sans", sans-serif' textLength="104" lengthAdjust="spacingAndGlyphs" >MA(50,0,0,200,0,0)</text>
<text x="331" y="14" fill="#dcdcdc" font-size="12.5" font-weight="normal" text-anchor="start" font-family='"Liberation Sans", sans-serif' textLength="73" lengthAdjust="spacingAndGlyphs" >MA50:0.6263</text>
<text x="413.5" y="14" fill="#d0d020" font-size="12.5" font-weight="normal" text-anchor="start" font-family='"Liberation Sans", sans-serif' textLength="66.5" lengthAdjust="spacingAndGlyphs" >MA0:0.6363</text>
<text x="489.7" y="14" fill="#cc22cc" font-size="12.5" font-weight="normal" text-anchor="start" font-family='"Liberation Sans", sans-serif' textLength="66.5" lengthAdjust="spacingAndGlyphs" >MA0:0.6363</text>
<text x="564.8" y="14" fill="#22cc22" font-size="12.5" font-weight="normal" text-anchor="start" font-family='"Liberation Sans", sans-serif' textLength="44" lengthAdjust="spacingAndGlyphs" >MA200:</text>
<rect x="683.5" y="0.5" width="15" height="15" fill="#000"/><rect x="684.5" y="1.5" width="13" height="13" fill="#080808" stroke="#b4b4b4" stroke-width="1"/>
<rect x="699.5" y="0.5" width="15" height="15" fill="#000"/><rect x="700.5" y="1.5" width="13" height="13" fill="#080808" stroke="#b4b4b4" stroke-width="1"/>
<rect x="715.5" y="0.5" width="15" height="15" fill="#000"/><rect x="716.5" y="1.5" width="13" height="13" fill="#080808" stroke="#b4b4b4" stroke-width="1"/>
<rect x="731.5" y="0.5" width="15" height="15" fill="#000"/><rect x="732.5" y="1.5" width="13" height="13" fill="#080808" stroke="#b4b4b4" stroke-width="1"/>
<g fill="#a8a8a8"><rect x="690" y="4" width="2" height="2"/><rect x="690" y="7" width="2" height="2"/><rect x="690" y="10" width="2" height="2"/><rect x="686" y="7" width="3" height="2"/><rect x="693" y="7" width="3" height="2"/></g>
<path d="M703.5,4.5 V12 M702,11.5 H712" stroke="#a8a8a8" stroke-width="1" fill="none"/>
<path d="M703.5,3 L705.5,5.5 H701.5 Z M703.5,13 L705.5,10.5 H701.5 Z M712.5,11.5 L710,9.5 V13.5 Z M701,11.5 L703.5,9.5 V13.5 Z" fill="#a8a8a8"/>
<path d="M707.5,4.5 V9.5" stroke="#a8a8a8" stroke-width="1"/><path d="M710.5,4.5 L708,7 L710.5,9.5 Z" fill="#a8a8a8"/>
<path d="M719.5,4.5 V12 M718,11.5 H728" stroke="#a8a8a8" stroke-width="1" fill="none"/>
<path d="M719.5,3 L721.5,5.5 H717.5 Z M719.5,13 L721.5,10.5 H717.5 Z M728.5,11.5 L726,9.5 V13.5 Z M717,11.5 L719.5,9.5 V13.5 Z" fill="#a8a8a8"/>
<path d="M722.3,4.5 L727.3,7.3 L722.3,10 Z" fill="#a8a8a8"/>
<rect x="734.5" y="3.5" width="3" height="9" fill="none" stroke="#a8a8a8" stroke-width="1"/><path d="M737.5,7.5 H741" stroke="#a8a8a8" stroke-width="1.2"/><path d="M740.5,5 L743.5,7.5 L740.5,10 Z" fill="#a8a8a8"/>
<text x="92.8" y="377" fill="#dcdcdc" font-size="12.5" font-weight="normal" text-anchor="start" font-family='"Liberation Sans", sans-serif' textLength="73.2" lengthAdjust="spacingAndGlyphs" >RSI(14,14,14)</text>
<text x="171.6" y="377" fill="#dcdcdc" font-size="12.5" font-weight="normal" text-anchor="start" font-family='"Liberation Sans", sans-serif' textLength="73.1" lengthAdjust="spacingAndGlyphs" >RSI1:60.1299</text>
<text x="254.4" y="377" fill="#d0d020" font-size="12.5" font-weight="normal" text-anchor="start" font-family='"Liberation Sans", sans-serif' textLength="71.9" lengthAdjust="spacingAndGlyphs" >RSI2:60.1299</text>
<text x="335.2" y="377" fill="#cc22cc" font-size="12.5" font-weight="normal" text-anchor="start" font-family='"Liberation Sans", sans-serif' textLength="73.9" lengthAdjust="spacingAndGlyphs" >RSI3:60.1299</text>
<g><circle cx="29" cy="491.8" r="4.2" fill="#000"/><circle cx="29" cy="491.8" r="3.2" fill="#fff"/><circle cx="29" cy="491.8" r="2" fill="#ff0000"/>
<line x1="34.2" y1="491.8" x2="36.3" y2="491.8" stroke="#ff0000" stroke-width="1.1"/>
<line x1="33.0" y1="495.8" x2="34.4" y2="497.2" stroke="#ff0000" stroke-width="1.1"/>
<line x1="29.0" y1="497.0" x2="29.0" y2="499.1" stroke="#ff0000" stroke-width="1.1"/>
<line x1="25.0" y1="495.8" x2="23.6" y2="497.2" stroke="#ff0000" stroke-width="1.1"/>
<line x1="23.8" y1="491.8" x2="21.7" y2="491.8" stroke="#ff0000" stroke-width="1.1"/>
<line x1="25.0" y1="487.8" x2="23.6" y2="486.4" stroke="#ff0000" stroke-width="1.1"/>
<line x1="29.0" y1="486.6" x2="29.0" y2="484.5" stroke="#ff0000" stroke-width="1.1"/>
<line x1="33.0" y1="487.8" x2="34.4" y2="486.4" stroke="#ff0000" stroke-width="1.1"/>
</g>
<text x="92.8" y="499.5" fill="#dcdcdc" font-size="12.5" font-weight="normal" text-anchor="start" font-family='"Liberation Sans", sans-serif' textLength="84" lengthAdjust="spacingAndGlyphs" >MACD(26,12,9)</text>
<text x="182.5" y="499.5" fill="#dcdcdc" font-size="12.5" font-weight="normal" text-anchor="start" font-family='"Liberation Sans", sans-serif' textLength="65" lengthAdjust="spacingAndGlyphs" >DIFF:0.0028</text>
<text x="256.8" y="499.5" fill="#d0d020" font-size="12.5" font-weight="normal" text-anchor="start" font-family='"Liberation Sans", sans-serif' textLength="64.6" lengthAdjust="spacingAndGlyphs" >DEA:0.0019</text>
<text x="334.4" y="499.5" fill="#cc22cc" font-size="12.5" font-weight="normal" text-anchor="start" font-family='"Liberation Sans", sans-serif' textLength="72.6" lengthAdjust="spacingAndGlyphs" >MACD:0.0019</text>
<text x="687" y="596" fill="#dde3ea" font-size="30.5" font-weight="normal" text-anchor="start" font-family='"Liberation Sans", sans-serif' >F</text>
<text x="707.8" y="596" fill="#dde3ea" font-size="30.5" font-weight="normal" text-anchor="start" font-family='"Liberation Sans", sans-serif' textLength="22" lengthAdjust="spacingAndGlyphs" >X</text>
<text x="729.5" y="596" fill="#dde3ea" font-size="30.5" font-weight="normal" text-anchor="start" font-family='"Liberation Sans", sans-serif' textLength="18.6" lengthAdjust="spacingAndGlyphs" >6</text>
<text x="749.3" y="596" fill="#dde3ea" font-size="30.5" font-weight="normal" text-anchor="start" font-family='"Liberation Sans", sans-serif' textLength="18.6" lengthAdjust="spacingAndGlyphs" >7</text>
<text x="769.3" y="596" fill="#dde3ea" font-size="30.5" font-weight="normal" text-anchor="start" font-family='"Liberation Sans", sans-serif' textLength="18.6" lengthAdjust="spacingAndGlyphs" >8</text>
<text x="143.5" y="598.3" fill="#f2f2f2" font-size="12.5" font-weight="bold" text-anchor="start" font-family='"Liberation Sans", sans-serif' textLength="44" lengthAdjust="spacingAndGlyphs" >2024/08</text>
<text x="231.1" y="598.3" fill="#f2f2f2" font-size="12.5" font-weight="bold" text-anchor="start" font-family='"Liberation Sans", sans-serif' textLength="44.6" lengthAdjust="spacingAndGlyphs" >2024/09</text>
<text x="315.4" y="598.3" fill="#f2f2f2" font-size="12.5" font-weight="bold" text-anchor="start" font-family='"Liberation Sans", sans-serif' textLength="43.6" lengthAdjust="spacingAndGlyphs" >2024/10</text>
<text x="491.2" y="598.3" fill="#f2f2f2" font-size="12.5" font-weight="bold" text-anchor="start" font-family='"Liberation Sans", sans-serif' textLength="44.5" lengthAdjust="spacingAndGlyphs" >2024/12</text>
<text x="575.3" y="598.3" fill="#f2f2f2" font-size="12.5" font-weight="bold" text-anchor="start" font-family='"Liberation Sans", sans-serif' textLength="43.5" lengthAdjust="spacingAndGlyphs" >2025/01</text>
<text x="663.4" y="598.3" fill="#f2f2f2" font-size="12.5" font-weight="bold" text-anchor="start" font-family='"Liberation Sans", sans-serif' textLength="44.1" lengthAdjust="spacingAndGlyphs" >2025/02</text>
<rect x="367" y="586" width="109" height="16" fill="#000"/>
<text x="368.8" y="598.3" fill="#e8902a" font-size="12.5" font-weight="normal" text-anchor="start" font-family='"Liberation Sans", sans-serif' textLength="104.7" lengthAdjust="spacingAndGlyphs" >2024/10/21 星期一</text>
<text x="91.2" y="0" fill="#dcdcdc" font-size="12.5" font-weight="normal" text-anchor="start" font-family='"Liberation Sans", sans-serif' ></text>
<text x="34.5" y="601.5" fill="#ff7f00" font-size="14" font-weight="bold" text-anchor="start" font-family='"Liberation Sans", sans-serif' textLength="24" lengthAdjust="spacingAndGlyphs" >日线</text>
<path d="M65,601 L69.5,593 L74,601 Z" fill="#ff7f00"/>
<rect x="19" y="604" width="798" height="17" fill="#1a1a1a"/>
<rect x="19.8" y="605" width="39.0" height="16" fill="#ff6a00"/>
<text x="39.3" y="617.8" fill="#ffffff" font-size="13" font-weight="normal" text-anchor="middle" font-family='"Liberation Sans", sans-serif' >指标</text>
<rect x="60.2" y="605" width="38.2" height="16" fill="#0a0a0a"/>
<text x="79.30000000000001" y="617.8" fill="#ffffff" font-size="13" font-weight="normal" text-anchor="middle" font-family='"Liberation Sans", sans-serif' >模板</text>
<rect x="100.3" y="605" width="55.8" height="16" fill="#0a0a0a"/>
<text x="107.89999999999999" y="617.3" fill="#ff7f00" font-size="12" font-weight="normal" text-anchor="start" font-family='"Liberation Mono", monospace' textLength="40.6" lengthAdjust="spacingAndGlyphs" >VIP指标</text>
<rect x="158.2" y="605" width="25.2" height="16" fill="#0a0a0a"/>
<text x="164.8" y="617.3" fill="#c8c8c8" font-size="12" font-weight="normal" text-anchor="start" font-family='"Liberation Mono", monospace' textLength="12" lengthAdjust="spacingAndGlyphs" >MA</text>
<rect x="185.5" y="605" width="38.2" height="16" fill="#0a0a0a"/>
<text x="192.6" y="617.3" fill="#c8c8c8" font-size="12" font-weight="normal" text-anchor="start" font-family='"Liberation Mono", monospace' textLength="24" lengthAdjust="spacingAndGlyphs" >MACD</text>
<rect x="225.7" y="605" width="38.2" height="16" fill="#0a0a0a"/>
<text x="232.79999999999998" y="617.3" fill="#c8c8c8" font-size="12" font-weight="normal" text-anchor="start" font-family='"Liberation Mono", monospace' textLength="24" lengthAdjust="spacingAndGlyphs" >BOLL</text>
<rect x="266.3" y="605" width="32.3" height="16" fill="#0a0a0a"/>
<text x="273.45000000000005" y="617.3" fill="#c8c8c8" font-size="12" font-weight="normal" text-anchor="start" font-family='"Liberation Mono", monospace' textLength="18" lengthAdjust="spacingAndGlyphs" >VOL</text>
<rect x="301.0" y="605" width="36.0" height="16" fill="#0a0a0a"/>
<text x="307.0" y="617.3" fill="#c8c8c8" font-size="12" font-weight="normal" text-anchor="start" font-family='"Liberation Mono", monospace' textLength="24" lengthAdjust="spacingAndGlyphs" >BIAS</text>
<rect x="339.9" y="605" width="34.9" height="16" fill="#0a0a0a"/>
<text x="348.35" y="617.3" fill="#c8c8c8" font-size="12" font-weight="normal" text-anchor="start" font-family='"Liberation Mono", monospace' textLength="18" lengthAdjust="spacingAndGlyphs" >CCI</text>
<rect x="376.5" y="605" width="29.2" height="16" fill="#0a0a0a"/>
<text x="382.1" y="617.3" fill="#c8c8c8" font-size="12" font-weight="normal" text-anchor="start" font-family='"Liberation Mono", monospace' textLength="18" lengthAdjust="spacingAndGlyphs" >KDJ</text>
<rect x="408.4" y="605" width="36.6" height="16" fill="#0a0a0a"/>
<text x="417.7" y="617.3" fill="#c8c8c8" font-size="12" font-weight="normal" text-anchor="start" font-family='"Liberation Mono", monospace' textLength="18" lengthAdjust="spacingAndGlyphs" >LW&amp;</text>
<rect x="447.5" y="605" width="33.5" height="16" fill="#0a0a0a"/>
<text x="455.25" y="617.3" fill="#c8c8c8" font-size="12" font-weight="normal" text-anchor="start" font-family='"Liberation Mono", monospace' textLength="18" lengthAdjust="spacingAndGlyphs" >RSI</text>
<rect x="483.8" y="605" width="26.4" height="16" fill="#0a0a0a"/>
<text x="491.0" y="617.3" fill="#c8c8c8" font-size="12" font-weight="normal" text-anchor="start" font-family='"Liberation Mono", monospace' textLength="12" lengthAdjust="spacingAndGlyphs" >CR</text>
<rect x="512.6" y="605" width="28.4" height="16" fill="#0a0a0a"/>
<text x="517.8" y="617.3" fill="#c8c8c8" font-size="12" font-weight="normal" text-anchor="start" font-family='"Liberation Mono", monospace' textLength="18" lengthAdjust="spacingAndGlyphs" >PSY</text>
<rect x="543.4" y="605" width="38.8" height="16" fill="#0a0a0a"/>
<text x="562.8" y="617.8" fill="#c8c8c8" font-size="13" font-weight="normal" text-anchor="middle" font-family='"Liberation Sans", sans-serif' >设置</text>
</svg></body></html>
